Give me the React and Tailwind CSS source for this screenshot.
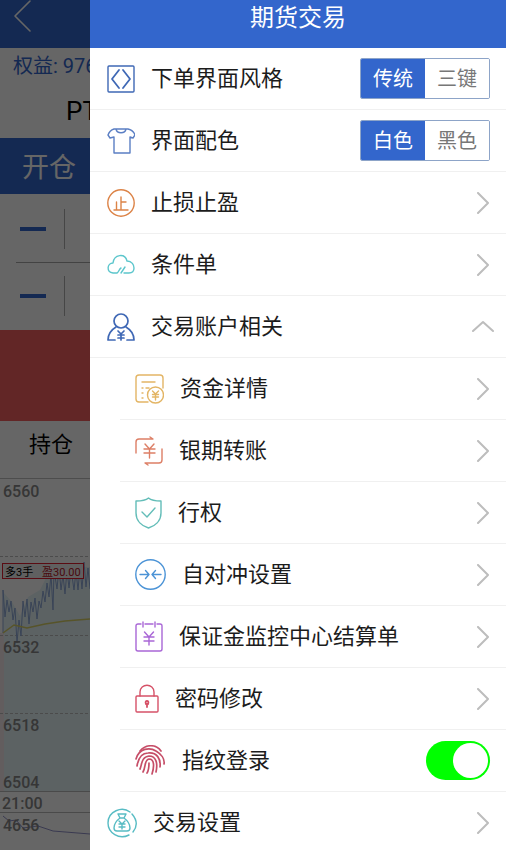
import React, { useState } from 'react';

const BLUE = '#3f68b5';

const Svg = ({ w = 28, h = 28, color, children, strokeWidth = 1.4 }) => (
	<svg
		width={w}
		height={h}
		viewBox={`0 0 ${w} ${h}`}
		fill="none"
		stroke={color}
		strokeWidth={strokeWidth}
		strokeLinecap="round"
		strokeLinejoin="round"
		className="shrink-0"
		aria-hidden="true"
	>
		{children}
	</svg>
);

const StyleIcon = () => (
	<Svg color={BLUE}>
		<rect x="1" y="1" width="26" height="26" rx="1" />
		<path d="M12 5 L5 14 L12 23 M16 5 L23 14 L16 23" strokeWidth="1.8" />
	</Svg>
);

const ShirtIcon = () => (
	<Svg color="#5b7fc4">
		<path d="M9 2 H7 C4 3 2 5 1 8 L3 11 L7 10 V26 H23 V10 L26 11 L28 8 C27 5 25 3 21 2 H19 C18 7 10 7 9 2 Z M9 2 H19" />
	</Svg>
);

const StopIcon = () => (
	<Svg color="#dc8347">
		<circle cx="14" cy="14" r="13.2" />
		<path d="M7 21 H21 M14 8 V21 M14 13 H19 M9.5 13 V21" />
	</Svg>
);

const CloudIcon = () => (
	<Svg color="#5cc6cc">
		<path d="M14 22 L18 16 M10 22 H6 C-1 21 0 12 6 12 C7 3 18 2 20 10 C25 10 27 14 27 17 C27 20 25 22 22 22 H17 M10 22 C12 21 12 18 14 17" />
	</Svg>
);

const AccountIcon = () => (
	<Svg color={BLUE} strokeWidth={1.7}>
		<circle cx="14" cy="8" r="7" />
		<path d="M8 27 H1 C1 21 4 17 9 14 M19 14 C24 17 27 21 27 27 H20" />
		<path d="M11 18 L14 21 L17 18 M14 21 V27 M11 22 H17 M11 25 H17" />
	</Svg>
);

const FundsIcon = () => (
	<Svg w={29} h={30} color="#e3b565">
		<path d="M13 28 H4 Q1 28 1 25 V4 Q1 1 4 1 H25 Q28 1 28 4 V14" />
		<path d="M7 8 H20 M7 14 H8 M11 14 H14 M7 19 H8 M7 24 H8" />
		<circle cx="20.5" cy="21" r="8" />
		<path d="M17.5 17 L20.5 20 L23.5 17 M20.5 20 V26 M17.5 20.5 H23.5 M17.5 23 H23.5" />
	</Svg>
);

const TransferIcon = () => (
	<Svg h={30} color="#dd7f66">
		<path d="M1 17 V6 Q1 3 4 3 H18 L15 1" />
		<path d="M27 13 V24 Q27 27 24 27 H10 L13 29" />
		<path d="M10 8 L14.5 13 L19 8 M14.5 13 V22 M9 13 H20 M9 17 H20" />
	</Svg>
);

const ShieldIcon = () => (
	<Svg w={27} h={32} color="#63bdb8">
		<path d="M13.5 1 C10 4 5 4 1 4 V16 C1 24 7 29 13.5 31 C20 29 26 24 26 16 V4 C22 4 17 4 13.5 1 Z" />
		<path d="M7 15 L12 20 L20 11" />
	</Svg>
);

const HedgeIcon = () => (
	<Svg w={31} h={31} color="#4b93d6">
		<circle cx="15.5" cy="15.5" r="14.7" />
		<path d="M5 15.5 H14 M10.5 11.5 L14 15.5 L10.5 19.5 M26 15.5 H17 M20.5 11.5 L17 15.5 L20.5 19.5" />
	</Svg>
);

const BillIcon = () => (
	<Svg h={31} color="#a967d6">
		<path d="M6 3 H3 Q1 3 1 5 V28 Q1 30 3 30 H25 Q27 30 27 28 V5 Q27 3 25 3 H22 M10 3 H18 M8 1 V6 M20 1 V6" />
		<path d="M9.5 11 L14 16 L18.5 11 M14 16 V24 M9 16 H19 M9 20 H19" />
	</Svg>
);

const LockIcon = () => (
	<Svg w={24} h={29} color="#d65268">
		<rect x="1" y="12" width="22" height="16" rx="1" />
		<path d="M5 12 V8 C5 -1 19 -1 19 8 V12" />
		<path d="M11 20 C9 16 15 16 13 20 M12 20 V23" strokeWidth="1.8" />
	</Svg>
);

const FingerIcon = () => (
	<Svg w={31} h={31} color="#c64e68" strokeWidth={1.7}>
		<path d="M5 6 C11 -1 21 -1 26 6" />
		<path d="M1 14 C4 3 15 2 21 6 C26 9 30 14 29 19" />
		<path d="M2 21 C3 15 5 8 13 8 C22 7 26 14 25 22" />
		<path d="M5 24 C7 20 6 12 14 11 C21 11 23 18 21 27" />
		<path d="M8 27 C11 22 9 15 14 14 C20 14 19 23 17 29" />
		<path d="M12 28 C14 25 14 21 14 18" />
	</Svg>
);

const BagIcon = () => (
	<Svg w={30} h={30} color="#58bcc4">
		<path d="M22 27 C12 32 1 25 1 15 C1 3 15 -2 23 4 M25 6 C31 13 30 19 26 24" />
		<path d="M11 6 H19 L17 10 H13 Z M13 10 C9 13 7 17 7 20 Q7 23 10 23 H20 Q23 23 23 20 C23 17 21 13 17 10" />
		<path d="M12 13 L15 16 L18 13 M15 16 V21 M12 16 H18 M12 19 H18" />
	</Svg>
);

const Chevron = ({ up }) => (
	<Svg w={22} h={22} color="#bdbdbd" strokeWidth={2}>
		{up ? <path d="M1 15 L11 6 L21 15" /> : <path d="M6 1 L16 11 L6 21" />}
	</Svg>
);

const SUB_ITEMS = [
	{ label: '资金详情', Icon: FundsIcon },
	{ label: '银期转账', Icon: TransferIcon },
	{ label: '行权', Icon: ShieldIcon },
	{ label: '自对冲设置', Icon: HedgeIcon },
	{ label: '保证金监控中心结算单', Icon: BillIcon },
	{ label: '密码修改', Icon: LockIcon },
];

const ROW = 'flex w-full h-[62px] items-center gap-4 border-b border-[#f0f0f0] pr-3 text-left';

const MenuButton = ({ label, Icon, sub, up, ...rest }) => (
	<button type="button" className={`${ROW} ${sub ? 'pl-[15px]' : 'pl-[17px]'}`} {...rest}>
		<Icon />
		<span className="flex-1">{label}</span>
		<Chevron up={up} />
	</button>
);

const Segment = ({ label, options }) => {
	const [active, setActive] = useState(options[0]);
	return (
		<div
			role="group"
			aria-label={label}
			className="mr-1 flex h-[41px] overflow-hidden rounded-[2px] border border-[#8da4c8] text-xl"
		>
			{options.map((o) => (
				<button
					key={o}
					type="button"
					aria-pressed={active === o}
					onClick={() => setActive(o)}
					className={`w-16 ${active === o ? 'bg-[#3366cc] text-white' : 'bg-white text-[#777777]'}`}
				>
					{o}
				</button>
			))}
		</div>
	);
};

const PriceChart = () => (
	<svg width="90" height="372" viewBox="0 0 90 372" fill="none" className="block">
		<path d="M0 .5 H90" stroke="#c0c0c0" />
		<path
			d="M3 155 V114 L12 124 L20 138 L28 119 L40 112 L48 96 L54 89 H90 V313 H3 Z"
			fill="#e6f4f8"
		/>
		<path d="M0 155 H4 V313 H0 Z" fill="#f6e8ea" />
		<path d="M0 78.5 H90 M0 157.5 H90 M0 235.5 H90" stroke="#bcbcbc" strokeDasharray="3 2" />
		<path d="M0 313.5 H90 M0 334.5 H90" stroke="#b8b8b8" />
		<path
			d="M3 155 V112 L5 139 L7 122 L9 134 L11 123 L13 142 L15 130 L17 165 L19 142 L21 158 L23 123 L25 139 L27 121 L29 146 L31 124 L33 134 L35 120 L37 141 L39 123 L41 130 L43 113 L45 124 L47 105 L49 119 L51 96 L53 132 L54 92 L57 111 L59 90 L61 112 L63 97 L65 116 L67 92 L69 110 L71 91 L74 112 L76 93 L78 112 L80 90 L82 111 L84 84 L86 109 L88 90 L90 111"
			stroke="#8fa9d8"
		/>
		<path d="M3 155 L14 147 L27 150 L45 146 L65 143 L90 141" stroke="#d9d168" strokeWidth="1.5" />
		<path d="M3 338 L9 343 L16 342 L23 350 L38 348 L53 353 L90 356" stroke="#9090c8" />
		<rect x="2.5" y="85.5" width="81" height="15" fill="#efefef" stroke="#e02030" />
		<g fontFamily="Roboto, 'Noto Sans CJK SC', sans-serif" fontSize="11">
			<text x="5" y="98" fill="#000000">多3手</text>
			<text x="42" y="98" fill="#b81828">盈30.00</text>
		</g>
		<g fontFamily="Roboto, sans-serif" fontSize="16" fontWeight="500" fill="#888888">
			<text x="3" y="19">6560</text>
			<text x="3" y="175">6532</text>
			<text x="3" y="253">6518</text>
			<text x="3" y="310">6504</text>
			<text x="2" y="331">21:00</text>
			<text x="3" y="353">4656</text>
		</g>
	</svg>
);

const Stepper = () => (
	<div className="flex h-[66px] items-center pl-5">
		<div className="h-1 w-[26px] bg-[#3366cc]" />
		<div className="ml-[18px] h-10 w-px bg-[#b0b0b0]" />
	</div>
);

// trading page, only the strip left of the drawer is visible
const TradePage = () => (
	<div className="relative h-full w-[90px] shrink-0 overflow-hidden whitespace-nowrap bg-white">
		<div className="h-12 bg-[#3366cc] pl-[13px]">
			<button type="button" aria-label="返回" className="block">
				<Svg w={20} h={34} color="#ffffff" strokeWidth={1.6}>
					<path d="M17 1 L2 16 L17 31" />
				</Svg>
			</button>
		</div>
		<div className="flex h-9 items-center pl-[13px] text-xl text-[#3366cc]">权益: 976</div>
		<div className="flex h-[54px] items-center pl-[66px] text-[26px] text-black">PT</div>
		<div className="flex h-14 items-center bg-[#3366cc] pl-[22px] pt-1 text-[27px] text-white">
			开仓
		</div>
		<div className="h-[136px] pt-[2px]">
			<Stepper />
			<div className="ml-4 h-px bg-[#a8a8a8]" />
			<Stepper />
		</div>
		<div className="h-[91px] bg-[#f55f5f]" />
		<div className="flex h-[57px] items-start pl-[29px] pt-2 text-[22px] leading-8 text-black">
			持仓
		</div>
		<PriceChart />
		<div className="absolute inset-0 bg-black/60" />
	</div>
);

const App = () => {
	const [open, setOpen] = useState(true);
	const [finger, setFinger] = useState(true);

	return (
		<div className="flex h-screen overflow-hidden font-[Roboto,'Noto_Sans_CJK_SC',sans-serif]">
			<TradePage />
			<div className="min-w-0 flex-1 bg-white text-[22px] text-[#1c1c1c]">
				<header className="flex h-12 items-center justify-center bg-[#3366cc] pb-3">
					<h1 className="text-2xl text-white">期货交易</h1>
				</header>
				<div className={`${ROW} pl-[17px]`}>
					<StyleIcon />
					<span className="flex-1">下单界面风格</span>
					<Segment label="下单界面风格" options={['传统', '三键']} />
				</div>
				<div className={`${ROW} pl-[17px]`}>
					<ShirtIcon />
					<span className="flex-1">界面配色</span>
					<Segment label="界面配色" options={['白色', '黑色']} />
				</div>
				<MenuButton label="止损止盈" Icon={StopIcon} />
				<MenuButton label="条件单" Icon={CloudIcon} />
				<MenuButton
					label="交易账户相关"
					Icon={AccountIcon}
					up={open}
					aria-expanded={open}
					onClick={() => setOpen(!open)}
				/>
				{open && (
					<div className="ml-[30px]">
						{SUB_ITEMS.map(({ label, Icon }) => (
							<MenuButton key={label} label={label} Icon={Icon} sub />
						))}
						<label className={`${ROW} pl-[15px]`}>
							<FingerIcon />
							<span className="flex-1">指纹登录</span>
							<input
								type="checkbox"
								role="switch"
								checked={finger}
								onChange={(e) => setFinger(e.target.checked)}
								className="mr-1 flex h-[39px] w-16 appearance-none items-center rounded-full bg-[#cccccc] px-[2px] before:size-[35px] before:rounded-full before:bg-white checked:justify-end checked:bg-[#00ff00]"
							/>
						</label>
					</div>
				)}
				<MenuButton label="交易设置" Icon={BagIcon} />
			</div>
		</div>
	);
};

export default App;
